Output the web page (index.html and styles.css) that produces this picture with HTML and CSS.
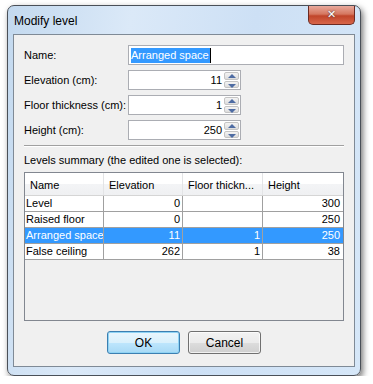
FILE: index.html
```html
<!DOCTYPE html>
<html lang="en">
<head>
    <meta charset="UTF-8">
    <title>Modify level</title>
    <link rel="stylesheet" href="styles.css">
</head>
<body>
    <div class="okno">
        <div class="pasek">
            <span class="tytul">Modify level</span>
            <div class="zamknij">&#x2715;</div>
        </div>
        <div class="panel">
            <div class="formularz">
                <label>Name:</label>
                <div class="pole pole-nazwa"><span class="zaznaczenie">Arranged space</span></div>

                <label>Elevation (cm):</label>
                <div class="pole pole-liczba">
                    <span class="wartosc">11</span>
                    <div class="spin"><span class="gora"></span><span class="dol"></span></div>
                </div>

                <label>Floor thickness (cm):</label>
                <div class="pole pole-liczba">
                    <span class="wartosc">1</span>
                    <div class="spin"><span class="gora"></span><span class="dol"></span></div>
                </div>

                <label>Height (cm):</label>
                <div class="pole pole-liczba">
                    <span class="wartosc">250</span>
                    <div class="spin"><span class="gora"></span><span class="dol"></span></div>
                </div>
            </div>

            <div class="separator"></div>
            <div class="opis">Levels summary (the edited one is selected):</div>

            <div class="tabela">
                <div class="wiersz naglowek">
                    <div>Name</div>
                    <div>Elevation</div>
                    <div>Floor thickn...</div>
                    <div>Height</div>
                </div>
                <div class="wiersz">
                    <div>Level</div>
                    <div class="num">0</div>
                    <div class="num"></div>
                    <div class="num">300</div>
                </div>
                <div class="wiersz">
                    <div>Raised floor</div>
                    <div class="num">0</div>
                    <div class="num"></div>
                    <div class="num">250</div>
                </div>
                <div class="wiersz wybrany">
                    <div>Arranged space</div>
                    <div class="num">11</div>
                    <div class="num">1</div>
                    <div class="num">250</div>
                </div>
                <div class="wiersz">
                    <div>False ceiling</div>
                    <div class="num">262</div>
                    <div class="num">1</div>
                    <div class="num">38</div>
                </div>
            </div>

            <div class="przyciski">
                <button class="domyslny">OK</button>
                <button>Cancel</button>
            </div>
        </div>
    </div>
</body>
</html>
```

FILE: styles.css
```css
body {
    margin: 0;
    background: #fff;
    font-family: "Liberation Sans", Arial, sans-serif;
    font-size: 11px;
    color: #000;
}
.okno {
    margin: 5px 0 0 7px;
    width: 354px;
    height: 371px;
    border: 1px solid #4a5058;
    border-radius: 7px;
    background: linear-gradient(100deg, #c3d9ef 0%, #dbe9f8 30%, #cde0f5 60%, #d6e7f8 100%);
    box-shadow: 2px 3px 6px rgba(0, 0, 0, 0.55);
    padding: 0 5px 8px 5px;
    box-sizing: border-box;
    display: flex;
    flex-direction: column;
}
.pasek {
    height: 28px;
    display: flex;
    justify-content: space-between;
    align-items: flex-start;
}
.tytul {
    margin-top: 8px;
    margin-left: 1px;
    font-size: 12px;
}
.zamknij {
    width: 47px;
    height: 19px;
    border: 1px solid #6b2a22;
    border-top: none;
    border-radius: 0 0 5px 5px;
    box-sizing: border-box;
    background: linear-gradient(to bottom, #e9a99c 0%, #d5775f 45%, #c0452a 55%, #d8664a 100%);
    color: #fff;
    font-family: "DejaVu Sans", sans-serif;
    font-size: 11px;
    font-weight: bold;
    text-align: center;
    line-height: 17px;
    text-shadow: 0 0 2px #333;
}
.panel {
    flex: 1;
    background: #f0f0f0;
    border: 1px solid #7f8a96;
    padding: 10px 10px 0 10px;
    display: flex;
    flex-direction: column;
}
.formularz {
    display: grid;
    grid-template-columns: 104px auto;
    grid-auto-rows: 20px;
    row-gap: 5px;
    align-items: center;
    justify-items: start;
}
.formularz label {
    white-space: nowrap;
}
.pole {
    height: 20px;
    box-sizing: border-box;
    border: 1px solid #abadb3;
    background: #fff;
    display: flex;
    align-items: center;
}
.pole-nazwa {
    width: 216px;
    padding-left: 2px;
}
.zaznaczenie {
    background: #3399ff;
    color: #fff;
    line-height: 15px;
    padding-right: 1px;
    border-right: 1px solid #000;
}
.pole-liczba {
    width: 113px;
    justify-content: flex-end;
    padding-right: 1px;
}
.wartosc {
    margin-right: 1px;
}
.spin {
    width: 15px;
    height: 16px;
    display: flex;
    flex-direction: column;
    gap: 1px;
    margin-left: 1px;
}
.spin span {
    flex: 1;
    background: linear-gradient(to bottom, #f4f4f4, #dcdcdc);
    border: 1px solid #c4c4c4;
    border-radius: 2px;
    position: relative;
}
.spin span::after {
    content: "";
    position: absolute;
    left: 3px;
    top: 2px;
    border-left: 4px solid transparent;
    border-right: 4px solid transparent;
}
.spin .gora::after {
    border-bottom: 4px solid #4e6ca3;
    top: 1px;
}
.spin .dol::after {
    border-top: 4px solid #4e6ca3;
}
.separator {
    margin-top: 5px;
    width: 320px;
    border-top: 1px solid #a0a0a0;
    border-bottom: 1px solid #fff;
}
.opis {
    margin-top: 4px;
    height: 21px;
    line-height: 18px;
}
.tabela {
    width: 320px;
    height: 149px;
    box-sizing: border-box;
    border: 1px solid #828790;
    background: #f0f0f0;
}
.wiersz {
    display: grid;
    grid-template-columns: 79px 79px 80px 79px;
    height: 16px;
    line-height: 15px;
    border-bottom: 1px solid #a0a0a0;
    background: #fff;
    box-sizing: border-box;
}
.wiersz div {
    border-right: 1px solid #a0a0a0;
    padding: 0 1px;
    white-space: nowrap;
    overflow: hidden;
}
.wiersz div:last-child {
    border-right: none;
}
.wiersz .num {
    text-align: right;
    padding-right: 2px;
}
.wybrany {
    background: #3399ff;
    color: #fff;
}
.naglowek {
    height: 23px;
    line-height: 24px;
    background: linear-gradient(to bottom, #fff 0%, #fff 50%, #f3f4f6 51%, #eff0f2 100%);
    border-bottom: 1px solid #d5d5d5;
}
.naglowek div {
    border-right: 1px solid #e3e4e6;
    padding-left: 5px;
}
.przyciski {
    display: flex;
    justify-content: center;
    gap: 8px;
    margin-top: 10px;
}
button {
    width: 73px;
    height: 23px;
    font-family: inherit;
    font-size: 12px;
    color: #000;
    border: 1px solid #707070;
    border-radius: 3px;
    background: linear-gradient(to bottom, #f2f2f2 0%, #ebebeb 50%, #dddddd 51%, #cfcfcf 100%);
    box-shadow: inset 0 0 0 1px rgba(255, 255, 255, 0.7);
    padding: 0;
}
button.domyslny {
    border-color: #3c7fb1;
    background: linear-gradient(to bottom, #eaf6fd 0%, #d9f0fc 50%, #bee6fd 51%, #a7d9f5 100%);
    box-shadow: inset 0 0 0 1px #8fd3f4;
}
```
